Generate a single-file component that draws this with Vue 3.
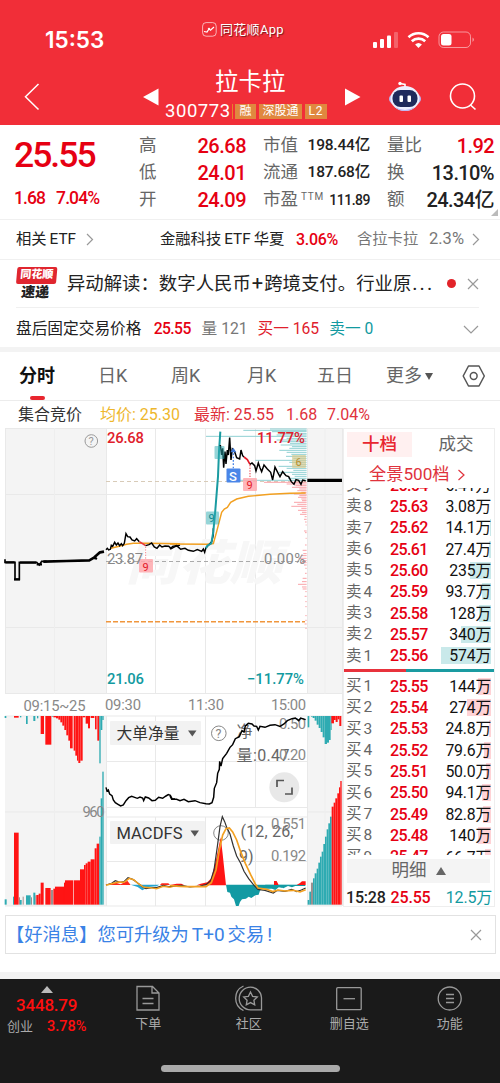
<script setup>
const quotes = [
  { l1: "高", v1: "26.68", l2: "市值", v2: "198.44亿", l3: "量比", v3: "1.92", up: true },
  { l1: "低", v1: "24.01", l2: "流通", v2: "187.68亿", l3: "换", v3: "13.10%" },
  { l1: "开", v1: "24.09", l2: "市盈", sup: "TTM", v2: "111.89", l3: "额", v3: "24.34亿" },
];

const tabs = ["分时", "日K", "周K", "月K", "五日"];

// bar = width of the depth bar behind the volume
const sells = [
  { n: 9, price: "25.64", vol: "6.41万", bar: 0 },
  { n: 8, price: "25.63", vol: "3.08万", bar: 0 },
  { n: 7, price: "25.62", vol: "14.1万", bar: 1 },
  { n: 6, price: "25.61", vol: "27.4万", bar: 2 },
  { n: 5, price: "25.60", vol: "235万", bar: 21 },
  { n: 4, price: "25.59", vol: "93.7万", bar: 9 },
  { n: 3, price: "25.58", vol: "128万", bar: 12 },
  { n: 2, price: "25.57", vol: "340万", bar: 30 },
  { n: 1, price: "25.56", vol: "574万", bar: 50 },
];
const buys = [
  { n: 1, price: "25.55", vol: "144万", bar: 13 },
  { n: 2, price: "25.54", vol: "274万", bar: 24 },
  { n: 3, price: "25.53", vol: "24.8万", bar: 2 },
  { n: 4, price: "25.52", vol: "79.6万", bar: 7 },
  { n: 5, price: "25.51", vol: "50.0万", bar: 5 },
  { n: 6, price: "25.50", vol: "94.1万", bar: 9 },
  { n: 7, price: "25.49", vol: "82.8万", bar: 8 },
  { n: 8, price: "25.48", vol: "140万", bar: 13 },
  { n: 9, price: "25.47", vol: "66.7万", bar: 6 },
];

const R = "#ff1414";
const T = "#2eabb2";
const G = "#9c8f8f";

// [x, width, end y, colour], three units to a pixel
const leftTop = [
  [14, 5, 24, T], [42, 14, 23, R], [60, 4, 22, T], [78, 5, 42, T], [100, 6, 33, T], [111, 4, 25, T],
  [122, 10, 72, R], [136, 18, 104, R], [155, 5, 20, T], [160, 8, 22, R], [168, 7, 25, R], [175, 6, 29, R],
  [181, 6, 37, R], [187, 6, 47, R], [193, 6, 60, R], [199, 6, 76, R], [205, 5, 92, R], [210, 8, 115, R],
  [221, 5, 122, R], [226, 5, 137, R], [231, 4, 152, R], [235, 6, 159, R], [241, 7, 152, R], [248, 8, 22, R],
  [257, 7, 41, R], [264, 6, 55, R], [272, 11, 24, R], [285, 5, 58, R], [292, 6, 92, R], [298, 4, 160, T],
  [302, 5, 60, T], [307, 4, 30, T],
];
const leftBottom = [
  [14, 6, 568, T], [39, 3, 560, T], [42, 14, 368, R], [57, 3, 562, G], [60, 5, 570, T], [68, 3, 560, G],
  [78, 14, 556, T], [93, 3, 562, G], [100, 6, 548, T], [106, 3, 556, G], [109, 7, 555, R], [116, 6, 551, R],
  [122, 9, 518, R], [136, 16, 534, R], [153, 6, 540, G], [160, 5, 536, R], [165, 27, 530, R], [192, 3, 518, R],
  [195, 24, 511, R], [221, 19, 511, R], [240, 12, 478, R], [252, 5, 465, R], [257, 6, 460, R], [263, 9, 455, R],
  [272, 12, 448, R], [284, 6, 415, R], [290, 8, 401, R], [298, 4, 380, T], [302, 5, 265, T], [307, 4, 185, T],
];
const rightTop = [
  [413, 5, 52, T], [423, 5, 20, T], [428, 6, 24, T], [434, 6, 32, T], [440, 6, 44, T], [446, 6, 54, T],
  [452, 6, 66, T], [458, 6, 82, T], [464, 7, 102, T], [471, 6, 98, T], [477, 5, 90, T], [482, 3, 60, T],
  [484, 8, 40, R], [492, 5, 30, R], [497, 6, 36, R], [503, 5, 28, R], [508, 6, 48, R],
];
const rightBottom = [
  [413, 5, 570, T], [418, 5, 545, T], [423, 6, 518, G], [429, 5, 505, T], [434, 6, 490, T], [440, 5, 476, T],
  [445, 5, 458, T], [450, 5, 440, T], [455, 5, 425, T], [460, 5, 402, T], [465, 5, 380, T], [470, 5, 358, T],
  [475, 5, 340, T], [480, 5, 320, T], [485, 6, 290, R], [491, 5, 278, R], [496, 6, 265, R], [502, 5, 250, R],
  [507, 4, 232, R], [511, 4, 213, R],
];

// price distribution at the right edge: [y, length]
const chips = [
  [12, 110], [16, 190], [20, 104], [26, 80], [30, 90], [34, 302], [40, 60], [45, 90], [50, 80], [55, 50],
  [60, 78], [65, 44], [70, 52], [76, 82], [82, 60], [88, 46], [94, 62], [100, 40], [106, 154], [112, 52],
  [118, 34], [124, 84], [130, 60], [136, 40], [142, 84], [148, 44], [154, 36], [160, 56], [166, 230],
];
const chipsDown = [
  [172, 128], [177, 60], [182, 34], [187, 44], [192, 22], [197, 28], [202, 16], [207, 38], [212, 22], [217, 26],
  [222, 16], [227, 14], [232, 38], [238, 28], [244, 46], [250, 16], [256, 26], [262, 14], [268, 20], [275, 6],
  [283, 8], [291, 5], [300, 3], [318, 8], [323, 5], [340, 3], [360, 5], [376, 12], [386, 10], [392, 16],
  [400, 24], [407, 12], [413, 20], [420, 8], [430, 4], [445, 5], [460, 12], [470, 14], [478, 26], [486, 14],
  [492, 12], [500, 4], [514, 6], [530, 4], [545, 4], [572, 4], [586, 4], [597, 6], [610, 4],
];
</script>

<template>
  <div class="app">
    <header class="header">
      <div class="status">
        <span class="clock">15:53</span>
        <span class="source">
          <svg width="15" height="15" viewBox="0 0 15 15" fill="none" stroke="#fff">
            <rect x=".6" y=".6" width="13.6" height="13.6" rx="3.5" stroke-width=".8" opacity=".8" />
            <path d="M2 9.5l3 .5 2-3 1.5 1.2L12 5" stroke-width="1.2" />
            <circle cx="7" cy="6.8" r=".7" fill="#fff" />
          </svg>
          同花顺App
        </span>
        <svg class="signals" width="104" height="18" viewBox="0 0 104 18">
          <g fill="#fff">
            <rect x="1" y="11" width="4" height="6" rx="1" />
            <rect x="8" y="8" width="4" height="9" rx="1" />
            <rect x="15" y="4.500" width="4" height="12.500" rx="1" />
            <rect x="22" y="1" width="4" height="16" rx="1" opacity=".25" />
            <path d="M46.500 17l-3.400-3.500a5 5 0 0 1 6.800 0z" />
          </g>
          <g fill="none" stroke="#fff" stroke-width="2.600">
            <path d="M36.500 6.300a14.500 14.500 0 0 1 20 0" />
            <path d="M39.800 10.300a9.700 9.700 0 0 1 13.400 0" />
          </g>
          <rect x="67" y="1" width="31.500" height="15.500" rx="4.500" fill="none" stroke="#fff" opacity=".5" />
          <rect x="69" y="3" width="10.500" height="11.500" rx="2.500" fill="#fff" />
          <path d="M100.500 6.500q3 2.200 0 4.500z" fill="#fff" opacity=".5" />
        </svg>
      </div>
      <div class="titlebar">
        <svg class="back" width="16" height="28" viewBox="0 0 16 28" fill="none" stroke="#fff" stroke-width="1.500">
          <path d="M14.500 1L1.500 13.800 14.500 26.500" />
        </svg>
        <svg width="16" height="18" viewBox="0 0 16 18"><path d="M0 9L15.500.500v17z" fill="#fff" /></svg>
        <div class="title">
          <h1>拉卡拉</h1>
          <p>
            <span class="code">300773</span><i></i><b class="b1">融</b><b class="b2">深股通</b><b class="b3">L2</b>
          </p>
        </div>
        <svg width="16" height="18" viewBox="0 0 16 18"><path d="M15.500 9L0 .500v17z" fill="#fff" /></svg>
        <svg class="robot" width="34" height="32" viewBox="0 0 34 32">
          <path d="M17 7V3.500l-5-1" stroke="#fff" stroke-width="1.600" fill="none" />
          <circle cx="12" cy="2.500" r="1.700" fill="#fff" />
          <ellipse cx="17" cy="18" rx="16" ry="8" fill="#b9b5f5" />
          <ellipse cx="17" cy="17.500" rx="14.500" ry="12.500" fill="#eef0ff" />
          <path d="M7 26q10 6 20 0-3 4-10 4t-10-4z" fill="#b9b5f5" />
          <rect x="4.500" y="9" width="25" height="17" rx="8" fill="#1f2a5c" />
          <rect x="11.500" y="14.500" width="3.500" height="6.500" rx="1" fill="#fff" />
          <rect x="19.500" y="14.500" width="3.500" height="6.500" rx="1" fill="#fff" />
        </svg>
        <svg width="28" height="28" viewBox="0 0 28 28" fill="none" stroke="#fff" stroke-width="1.600">
          <circle cx="13.500" cy="13" r="12" />
          <path d="M21.500 22l5 4.500" />
        </svg>
      </div>
    </header>

    <section class="quote">
      <div class="last">
        <strong>25.55</strong>
        <p><span>1.68</span><span>7.04%</span></p>
      </div>
      <div class="grid">
        <template v-for="q in quotes" :key="q.l1">
          <label>{{ q.l1 }}</label>
          <span class="v1">{{ q.v1 }}</span>
          <label class="l2">{{ q.l2 }}<sup v-if="q.sup">{{ q.sup }}</sup></label>
          <span class="v2" :class="{ small: q.sup }">{{ q.v2 }}</span>
          <label class="l3">{{ q.l3 }}</label>
          <span class="v3" :class="{ up: q.up }">{{ q.v3 }}</span>
        </template>
      </div>
      <svg class="corner" width="7" height="7"><path d="M7 0v7H0z" fill="#bbb" /></svg>
    </section>

    <section class="etf">
      <span class="e1">相关<em>ETF</em></span>
      <svg width="8" height="13" viewBox="0 0 8 13"><path d="M1 1l5.500 5.500L1 12" fill="none" stroke="#999" stroke-width="1.200" /></svg>
      <span class="e2">金融科技<em>ETF</em>华夏</span>
      <span class="e3">3.06%</span>
      <span class="e4">含拉卡拉</span>
      <span class="e5">2.3%</span>
      <svg width="8" height="13" viewBox="0 0 8 13"><path d="M1 1l5.500 5.500L1 12" fill="none" stroke="#999" stroke-width="1.200" /></svg>
    </section>

    <section class="news">
      <div class="logo">
        <b>同花顺</b>
        <i>速递</i>
      </div>
      <p>异动解读：数字人民币<em>+</em>跨境支付。行业原<em class="dots">...</em></p>
      <span class="dot"></span>
      <svg width="12" height="12" viewBox="0 0 12 12"><path d="M1 1l10 10M11 1L1 11" stroke="#999" stroke-width="1.200" /></svg>
    </section>

    <section class="after">
      <span class="a1">盘后固定交易价格</span>
      <span class="a2">25.55</span>
      <span class="a3">量 121</span>
      <span class="a4">买一 165</span>
      <span class="a5">卖一 0</span>
      <svg width="16" height="9" viewBox="0 0 16 9"><path d="M1 1l7 7 7-7" fill="none" stroke="#999" stroke-width="1.200" /></svg>
    </section>

    <nav class="tabs">
      <span v-for="(t, i) in tabs" :key="t" :class="{ active: i === 0 }">{{ t }}</span>
      <span class="more">更多<svg width="8" height="7"><path d="M0 0h8L4 7z" fill="#555" /></svg></span>
      <svg width="24" height="22" viewBox="0 0 24 22" fill="none" stroke="#555" stroke-width="1.500">
        <path d="M6.500 1h10.500l5.300 10L17 21H6.500L1.200 11z" stroke-linejoin="round" />
        <circle cx="11.700" cy="11" r="3.400" />
      </svg>
    </nav>

    <section class="info">
      <span class="i1">集合竞价</span>
      <span class="i2">均价: 25.30</span>
      <span class="i3">最新: 25.55</span>
      <span class="i4">1.68</span>
      <span class="i5">7.04%</span>
    </section>

    <main class="board">
      <svg class="chart" width="343" height="479" viewBox="0 428 343 479">
        <!-- auction and after-hours areas -->
        <path d="M5 428h101v266H5zM307 428h35v266h-35zM5 716h101v190H5zM307 716h35v190h-35z" fill="#f4f4f4" />
        <g stroke="#e9e9e9" stroke-width="1" fill="none">
          <path d="M5 428.500H342M5 494.500H342M5 627.500H342M5 693.500H342" />
          <path d="M5 716H342M106 761.500H307M106 807.500H307M5 812H106M307 812H342M106 817H307M106 861.500H307M5 906H342" />
          <path d="M5.500 428V694M106.500 428V694M155.500 428V694M205.500 428V694M255.500 428V694M307.500 428V694M342.500 428V906" />
          <path d="M106.500 716V906M155.500 716V807M205.500 716V807M255.500 716V807M155.500 817V906M205.500 817V906M255.500 817V906M307.500 716V906" />
        </g>
        <path d="M54.500 428V694M54.500 716V906M325 428V694M325 716V906" stroke="#eee" />

        <text x="126" y="580" class="mark" textLength="156" lengthAdjust="spacingAndGlyphs">同花顺</text>

        <g fill="none">
          <path d="M106 481.500H307" stroke="#d8cbb8" stroke-dasharray="4 3" />
          <path d="M106 561.500H307" stroke="#aaa" stroke-dasharray="4 3" />
          <path d="M106 621.700H305" stroke="#f0963c" stroke-width="1.500" stroke-dasharray="5 2" />
        </g>

        <g transform="translate(170 425) scale(.3333)" stroke-width="3">
          <path v-for="c in chips" :key="c[0]" :d="`M410 ${c[0]}h${-c[1]}`" stroke="#8fd0d3" />
          <path v-for="c in chipsDown" :key="c[0]" :d="`M410 ${c[0]}h${-c[1]}`" stroke="#f9a3a8" />
        </g>

        <g class="line" transform="translate(0 425) scale(.3333)">
          <polyline class="avg" points="333,370 360,363 380,358 400,355 437,355 540,356" />
          <polyline points="15,403 15,412 45,412 45,463 58,463 58,412 110,412 118,420 125,409 140,409" stroke-width="5" />
          <path d="M42 463h18M16 412h28M60 413h48M110 418h16" stroke-width="7" />
          <polyline points="130,410 200,408 268,406 282,398 288,400 284,396 300,382 312,380" stroke-width="8" stroke-linejoin="round" />
          <polyline points="318,374 322,370 326,375 331,373 334,361 338,364 344,352 349,360 354,354 359,362 364,356 368,362 373,355 378,326 383,335 390,336 396,345 404,348 410,341 418,350" />
          <polyline points="418,350 437,362" stroke="#e8323c" stroke-width="5" />
          <polyline points="437,362 447,359 455,354 463,366 471,370 479,360 486,366 495,363 506,364 514,371 525,365 540,360" />
          <path d="M437 365v40" stroke="#f58a90" stroke-width="3" stroke-dasharray="4 4" />
        </g>
        <g class="line" transform="translate(170 425) scale(.3333)">
          <polyline class="avg" points="0,357 110,358 130,356 140,320 155,262 163,252 172,247 182,232 200,222 235,214 300,208 360,205 407,204" />
          <polyline points="0,373 8,364 20,362 32,373 45,370 55,376 70,379 82,374 95,379 100,372 104,382 108,368 118,358 125,350 130,330 130,310" />
          <polyline points="108,370 112,362 124,355 130,320 136,255 144,155 147,80 151,20" stroke="#1a9ba1" stroke-width="6" />
          <polyline points="151,60 155,90 158,70 161,128 165,80 168,117 172,75 175,90 179,38 183,105 187,72 194,80 200,98 209,102 213,75 218,92 222,96" />
          <polyline points="222,96 232,104 240,118" stroke="#e31b29" stroke-width="5" />
          <polyline points="240,118 246,114 254,122 258,138 265,114 270,128 275,140 282,120 292,132 302,142 308,165 315,126 323,142 330,155 338,140 348,152 356,155 364,170 372,178 378,164 386,166 393,178 398,165 407,167" />
          <path d="M412 166H516" stroke-width="10" />
          <path d="M190 85v45" stroke="#4a86e8" stroke-width="4" stroke-dasharray="5 5" />
          <path d="M190 68l9 14h-18z" fill="#3f78d8" stroke="none" />
          <path d="M240 120v40" stroke="#e8323c" stroke-width="3" stroke-dasharray="4 4" />
        </g>

        <rect x="139" y="559" width="14" height="13.500" rx="1" fill="#ffa9ae" opacity=".85" />
        <text x="142.500" y="570.500" class="tag" fill="#e31b29">9</text>
        <rect x="243" y="478" width="14" height="13" rx="1" fill="#ffa9ae" opacity=".85" />
        <text x="246.500" y="489" class="tag" fill="#e31b29">9</text>
        <rect x="226.500" y="468.500" width="14" height="14" rx="1" fill="#4a86e8" />
        <text x="229" y="480.500" class="tag s" fill="#fff">S</text>
        <rect x="206" y="511.500" width="13" height="13" rx="1" fill="#2eabb2" opacity=".5" />
        <text x="208.500" y="522" class="tag" fill="#128a90">9</text>
        <rect x="214.500" y="446" width="10" height="13" rx="1" fill="#2eabb2" opacity=".5" />
        <rect x="292" y="455" width="14" height="13" rx="1" fill="#d9c98a" opacity=".65" />
        <text x="295.500" y="466" class="tag" fill="#b98f2e">6</text>

        <circle cx="91.300" cy="441" r="6.300" fill="none" stroke="#999" />
        <text x="88.500" y="445.200" font-size="11" fill="#999">?</text>

        <g class="num">
          <text x="107" y="443" textLength="37" fill="#e0202c">26.68</text>
          <text x="257" y="443" textLength="48" fill="#e0202c">11.77%</text>
          <text x="107" y="684" textLength="37" fill="#129aa0">21.06</text>
          <text x="247" y="684" textLength="57" fill="#129aa0">−11.77%</text>
        </g>
        <g class="num gray">
          <text x="107" y="564" textLength="36">23.87</text>
          <text x="264" y="564" textLength="41">0.00%</text>
          <text x="23.500" y="711" textLength="62">09:15~25</text>
          <text x="105" y="710" textLength="36">09:30</text>
          <text x="188" y="710" textLength="36">11:30</text>
          <text x="271" y="710" textLength="35">15:00</text>
        </g>

        <g transform="translate(0 710) scale(.3333)">
          <rect v-for="b in leftTop" :key="b[0]" :x="b[0]" y="18" :width="b[1]" :height="b[2] - 18" :fill="b[3]" />
          <rect v-for="b in leftBottom" :key="b[0]" :x="b[0]" :y="b[2]" :width="b[1]" :height="584 - b[2]" :fill="b[3]" />
        </g>
        <g transform="translate(170 710) scale(.3333)">
          <rect v-for="b in rightTop" :key="b[0]" :x="b[0]" y="18" :width="b[1]" :height="b[2] - 18" :fill="b[3]" />
          <rect v-for="b in rightBottom" :key="b[0]" :x="b[0]" :y="b[2]" :width="b[1]" :height="584 - b[2]" :fill="b[3]" />
        </g>
        <text x="82.500" y="817" class="num gray" textLength="22">960</text>

        <!-- indicator selectors -->
        <rect x="110" y="721" width="91" height="24" rx="1" fill="#f2f2f2" />
        <text x="116.500" y="739" class="sel" textLength="63">大单净量</text>
        <path d="M188 730.500h8.500l-4.200 6z" fill="#555" />
        <rect x="110" y="821" width="95" height="23" rx="1" fill="#f2f2f2" />
        <text x="116.500" y="838.500" class="sel latin" textLength="66">MACDFS</text>
        <path d="M190.500 830.500h8.500l-4.200 6z" fill="#555" />
        <circle cx="218.800" cy="733.300" r="7.300" fill="none" stroke="#888" />
        <text x="215.500" y="738" font-size="12.500" fill="#888">?</text>
        <circle cx="221" cy="833" r="7.300" fill="none" stroke="#888" />
        <text x="236.500" y="737" class="val">净</text>
        <text x="236.500" y="761" class="val" textLength="53">量:0.47</text>
        <text x="240.500" y="836.500" class="val" textLength="53">(12, 26,</text>
        <text x="239" y="861.500" class="val">9)</text>
        <g class="num gray axis">
          <text x="279" y="729" textLength="27">0.50</text>
          <text x="279" y="760" textLength="27">0.20</text>
          <text x="271" y="829" textLength="35">0.551</text>
          <text x="271" y="860.500" textLength="35">0.192</text>
        </g>

        <g class="line" transform="translate(0 710) scale(.3333)">
          <polyline points="318,232 321,243 325,240 329,252 336,257 340,270 346,278 354,283 362,288 370,285 378,272 386,263 395,259 404,262 412,265 420,261 428,264 431,272 436,261 446,264 456,272 466,271 476,262 488,265 498,258 505,254 511,256 516,266 525,267" />
          <path d="M320 525q15-8 30-6l12 4 20-11 10 13zM480 525l5-5h20l5 5z" fill="#ff2a1c" stroke="none" />
          <path d="M392 524h86l-8 5-25 2-18 10-14-10z" fill="#25a4d0" stroke="none" />
          <polyline class="thin" points="318,525 335,520 346,512 360,517 372,515 384,503 400,509 412,518 428,530 438,536 456,533 470,533 490,526 505,530 527,528" />
          <polyline class="avg" points="318,526 340,520 355,516 372,517 388,505 402,510 416,522 432,532 450,533 470,536 490,529 510,532 527,527" />
        </g>
        <g class="line" transform="translate(170 710) scale(.3333)">
          <polyline points="0,258 5,268 20,268 30,272 42,268 55,275 75,272 90,278 108,281 118,282 126,278 131,262 133,235 140,218 143,190 148,178 149,154 153,168 158,146 170,130 180,112 188,104 196,86 208,80 216,62 222,66 226,48 235,40 246,42 252,48 260,49 265,60 270,49 285,52 300,46 315,44 330,49 342,42 352,32 366,26 376,24 386,32 392,24 407,29" />
          <path d="M80 526l12-5 20-4 12-12 14-55 14-68 6 50 10 94z" fill="#ff1414" stroke="none" />
          <path d="M168 524l4 22 8 2 4 12 8 8 6 20h8l4-12 6-8 12-2 8-6 8 4 12-8 10-2 4-12 6-6h30l10 4 10-8 12 2v-6h68v-3z" fill="#129aa3" stroke="none" />
          <path d="M285 524h40v8l-18 2zM326 524h60l-20 8-12-4-14 7z" fill="#129aa3" stroke="none" />
          <path d="M312 525v-12h8l6 12zM380 525l10-6 6-5h11v11zM0 525l20-4h14l8 4z" fill="#ff1414" stroke="none" />
          <polyline class="thin" points="0,529 35,526 60,531 90,528 108,524 122,512 132,480 142,410 150,350 157,320 164,335 170,352 180,372 190,408 200,438 212,460 222,484 236,506 252,526 264,538 285,541 310,549 322,541 345,544 365,538 380,545 394,540 407,534" />
          <polyline class="avg" points="0,527 30,529 50,530 80,530 108,530 124,518 138,480 148,420 158,375 168,356 178,354 188,366 200,390 212,425 226,460 242,494 256,522 264,534 290,538 308,545 325,540 345,543 370,541 390,546 407,539" stroke-width="5" />
        </g>
        <circle cx="284.300" cy="787.300" r="15" fill="#e6e6e6" opacity=".9" />
        <path d="M277 787v-6.500h7M292 787.500v6.500h-7" fill="none" stroke="#555" stroke-width="1.700" />
      </svg>

      <aside class="depth">
        <div class="switch"><span class="on">十档</span><span>成交</span></div>
        <div class="full">全景500档<svg width="7" height="12" viewBox="0 0 7 12"><path d="M.500 1L6 6 .500 11" fill="none" stroke="#e0323c" stroke-width="1.200" /></svg></div>
        <ul class="sell">
          <li v-for="s in sells" :key="s.n">
            <span class="lv">卖<em>{{ s.n }}</em></span><span class="pr">{{ s.price }}</span>
            <span class="vo"><i :style="{ width: s.bar + 'px' }"></i>{{ s.vol }}</span>
          </li>
        </ul>
        <div class="ratio"><i></i></div>
        <ul class="buy">
          <li v-for="b in buys" :key="b.n">
            <span class="lv">买<em>{{ b.n }}</em></span><span class="pr">{{ b.price }}</span>
            <span class="vo"><i :style="{ width: b.bar + 'px' }"></i>{{ b.vol }}</span>
          </li>
        </ul>
        <div class="detail">明细<svg width="10" height="8"><path d="M5 0l5 8H0z" fill="#666" /></svg></div>
        <div class="tick"><span>15:28</span><span class="p">25.55</span><span class="t">12.5万</span></div>
      </aside>
    </main>

    <section class="banner">
      <p>【好消息】您可升级为<em>T+0</em>交易<em>!</em></p>
      <svg width="12" height="12" viewBox="0 0 12 12"><path d="M1 1l10 10M11 1L1 11" stroke="#999" stroke-width="1.200" /></svg>
    </section>

    <footer class="footer">
      <div class="bar">
        <div class="index">
          <svg width="12" height="7"><path d="M6 0l6 7H0z" fill="#bbb" /></svg>
          <strong>3448.79</strong>
          <p><span>创业</span><b>3.78%</b></p>
        </div>
        <div class="item">
          <svg width="26" height="26" viewBox="0 0 26 26">
            <path d="M2 1.500h15.500l6.500 6.500v17H2zM17 1.500V8h7M7.500 13.500h11M7.500 18.500h11" />
          </svg>
          下单
        </div>
        <div class="item">
          <svg width="28" height="26" viewBox="0 0 28 26">
            <path d="M15.500 2.200a11.300 11.300 0 1 0 0 22.600h11v-12a11 11 0 0 0-11-10.600zM8.500 1a13.500 13.500 0 0 0 0 24.500" />
            <path d="M15.500 7l2.100 4.300 4.700.600-3.400 3.300.800 4.700-4.200-2.300-4.200 2.300.800-4.700-3.400-3.300 4.700-.600z" />
          </svg>
          社区
        </div>
        <div class="item">
          <svg width="26" height="26" viewBox="0 0 26 26"><rect x=".700" y="2.700" width="24.500" height="22" rx="1" /><path d="M7.500 13.700h11.500" /></svg>
          删自选
        </div>
        <div class="item">
          <svg width="26" height="26" viewBox="0 0 26 26"><circle cx="12.700" cy="13.500" r="11.500" /><path d="M9 9.500h8M9 13.500h8M9 17.500h8" /></svg>
          功能
        </div>
      </div>
      <div class="home"></div>
    </footer>
  </div>
</template>

<style>
body {
  background: #fff;
}
</style>

<style scoped>
* {
  box-sizing: border-box;
}

.app {
  width: 500px;
  height: 1083px;
  overflow: hidden;
  display: flex;
  flex-direction: column;
  font-family: Roboto, "Noto Sans CJK SC", sans-serif;
  color: #222;
  line-height: 1;
  white-space: nowrap;
}

p, h1, ul {
  margin: 0;
  padding: 0;
}

em, i, sup {
  font-style: normal;
}

svg {
  flex: none;
  display: block;
}

.header {
  height: 125px;
  background: #f12e38;
  color: #fff;
}

.status {
  display: flex;
  height: 68px;
}

.clock {
  width: 157px;
  padding: 29px 0 0 45px;
  font: 600 22.5px/1 Inter, sans-serif;
  letter-spacing: 0;
}

.source {
  display: flex;
  gap: 3px;
  width: 170px;
  padding: 22px 0 0 45px;
  font-size: 13px;
  line-height: 15px;
  letter-spacing: 0.3px;
  text-shadow: 1px 1px 1px rgba(0, 0, 0, 0.5);
}

.signals {
  margin: 31px 0 0 45px;
}

.titlebar {
  display: flex;
  align-items: center;
  height: 57px;
  padding-left: 24px;
}

.titlebar .back {
  margin-right: 103px;
}

.title {
  width: 165px;
  margin: 0 15px 0 6px;
  height: 57px;
}

.title h1 {
  margin: 1px 0 0 50px;
  font-size: 23.5px;
  line-height: 26px;
  font-weight: 400;
}

.title p {
  display: flex;
  align-items: center;
  height: 17px;
  margin: 8px 0 0;
}

.title p .code {
  font-size: 18.5px;
  letter-spacing: 0.55px;
}

.title p i {
  width: 2px;
  height: 15px;
  margin: 0 2.500px 0 1px;
  background: #e8802c;
}

.title p b {
  height: 15px;
  margin-right: 3px;
  background: #e0883f;
  font-size: 12px;
  line-height: 14px;
  font-weight: 400;
  text-align: center;
  flex: none;
}

.b1 {
  width: 21px;
}

.b2 {
  width: 43px;
}

.title p .b3 {
  width: 22px;
  letter-spacing: 1px;
}

.robot {
  margin: 0 27px 0 27px;
}

.quote {
  position: relative;
  display: flex;
  height: 95px;
  padding: 7px 6px 0 14px;
  border-bottom: 1px solid #f0f0f0;
}

.last {
  width: 125px;
  color: #e60012;
}

.last strong {
  display: block;
  margin-top: 6px;
  font-size: 35.5px;
  line-height: 35px;
  font-weight: 500;
  letter-spacing: -2px;
}

.last p {
  display: flex;
  gap: 11px;
  margin-top: 17px;
  font-size: 17.5px;
  font-weight: 500;
  letter-spacing: -0.9px;
}

.grid {
  display: grid;
  grid-template-columns: 47px 60px 47px 77px 42px 82px;
  grid-auto-rows: 27px;
  align-items: center;
  font-size: 17.5px;
}

.grid label {
  color: #666;
}

.grid .l2,
.grid .l3 {
  padding-left: 17px;
}

.grid span {
  justify-self: end;
  font-weight: 500;
}

.grid .v1 {
  color: #e60012;
  font-size: 20px;
  letter-spacing: -0.5px;
}

.grid .v2 {
  font-size: 15.5px;
  letter-spacing: -0.2px;
}

.grid .v2.small {
  font-size: 14px;
  letter-spacing: -0.5px;
}

.grid .v3 {
  font-size: 20px;
  letter-spacing: -0.6px;
}

.grid .up {
  color: #e60012;
}

.grid sup {
  margin-left: 3px;
  font-size: 10px;
  letter-spacing: 0.8px;
  vertical-align: 5px;
  line-height: 0;
}

.corner {
  position: absolute;
  right: 2px;
  bottom: 3px;
}

.etf {
  display: flex;
  align-items: center;
  height: 40px;
  padding-left: 16px;
  border-bottom: 1px solid #f0f0f0;
  font-size: 15.300px;
}

.etf em {
  margin: 0 3px;
}

.etf .e1 {
  width: 70px;
}

.etf .e2 {
  width: 136px;
  margin-left: 66px;
}

.etf .e3 {
  width: 61px;
  color: #e60012;
  font-weight: 500;
  font-size: 16px;
  letter-spacing: -0.3px;
}

.etf .e4 {
  width: 72px;
  color: #777;
}

.etf .e5 {
  width: 43px;
  color: #777;
  font-size: 16.500px;
}

.news {
  display: flex;
  align-items: center;
  height: 48px;
  margin: 0 21px 0 16px;
  border-bottom: 1px solid #f0f0f0;
}

.logo {
  width: 40px;
  margin-right: 11px;
  transform: skewX(-5deg);
  text-align: center;
  font-weight: 900;
}

.logo b {
  display: block;
  height: 17px;
  border-radius: 2px;
  background: #e0262f;
  color: #fff;
  font-size: 11px;
  line-height: 16px;
  font-weight: 900;
}

.logo i {
  display: block;
  margin-top: 1px;
  font-size: 14px;
  line-height: 15px;
}

.news p {
  width: 381px;
  font-size: 18.400px;
}

.news p em {
  margin: 0 1px;
  font-size: 20px;
}

.news p .dots {
  letter-spacing: 2px;
}

.news .dot {
  width: 9px;
  height: 9px;
  margin-right: 11px;
  border-radius: 50%;
  background: #e22329;
  flex: none;
}

.after {
  display: flex;
  align-items: center;
  height: 44px;
  padding: 3px 21px 0 16px;
  border-bottom: 5px solid #f3f3f3;
  font-size: 15.700px;
}

.after .a1 {
  width: 138px;
}

.after .a2 {
  width: 48px;
  color: #e60012;
  font-weight: 500;
  letter-spacing: -0.6px;
}

.after .a3 {
  width: 56px;
  color: #777;
}

.after .a4 {
  width: 72px;
  color: #e0202c;
}

.after .a5 {
  width: 134px;
  color: #129aa0;
}

.tabs {
  display: grid;
  grid-template-columns: 79px 73px 76px 70px 69px 76px 24px;
  align-items: center;
  height: 49px;
  padding-left: 19px;
  border-bottom: 1px solid #ececec;
  font-size: 18px;
  color: #666;
}

.tabs span {
  display: flex;
  align-items: center;
}

.tabs .active {
  position: relative;
  color: #111;
  font-weight: 700;
}

.tabs .active::after {
  content: "";
  position: absolute;
  left: 11px;
  top: 29px;
  width: 15px;
  height: 4px;
  border-radius: 2px;
  background: #e8262f;
}

.tabs .more svg {
  margin-left: 3px;
}

.info {
  display: flex;
  align-items: center;
  height: 27px;
  padding-left: 18px;
  font-size: 16px;
  color: #e0323c;
  flex: none;
}

.info .i1 {
  width: 82px;
  color: #333;
}

.info .i2 {
  width: 94px;
  color: #eeb72c;
}

.info .i3 {
  width: 92px;
}

.info .i4 {
  width: 41px;
}

.board {
  display: flex;
  height: 479px;
  flex: none;
}

.chart text {
  font-family: Roboto, "Noto Sans CJK SC", sans-serif;
}

.chart .num text,
.chart text.num {
  font-size: 14.800px;
}

.chart .gray text,
.chart text.gray {
  fill: #888;
}

.chart .num:not(.gray) text {
  font-weight: 500;
}

.chart .mark {
  font-size: 48px;
  font-weight: 900;
  font-style: italic;
  fill: #f7f7f7;
}

.chart .tag {
  font-size: 11px;
}

.chart .tag.s {
  font-size: 13px;
  font-weight: 500;
}

.chart .sel {
  font-size: 15.700px;
  fill: #333;
}

.chart .sel.latin {
  font-size: 16.500px;
}

.chart .val {
  font-size: 16px;
  fill: #666;
}

.line {
  fill: none;
  stroke: #000;
  stroke-width: 4.4px;
}

.line .thin {
  stroke: #333;
  stroke-width: 3.6px;
}

.line .avg {
  stroke: #f2a021;
}

.depth {
  width: 152px;
  border: 1px solid #eee;
  font-size: 15.500px;
}

.switch {
  display: flex;
  height: 28px;
  padding: 3px 2px 0 3px;
  color: #666;
  font-size: 17.500px;
}

.switch span {
  width: 75px;
  height: 25px;
  line-height: 24px;
  text-align: center;
}

.switch .on {
  width: 68px;
  margin-right: 8px;
  background: #fff0f0;
  color: #e8262f;
  font-weight: 500;
}

.full {
  display: flex;
  align-items: center;
  gap: 8px;
  height: 31px;
  padding: 4px 0 0 25px;
  color: #e0323c;
  font-size: 17.200px;
}

ul {
  display: flex;
  flex-direction: column;
  overflow: hidden;
  list-style: none;
}

.sell {
  height: 179px;
  justify-content: flex-end;
}

.buy {
  height: 179px;
}

li {
  display: flex;
  align-items: center;
  height: 21.350px;
  padding: 0 3px 0 2px;
  flex: none;
}

.lv {
  width: 44px;
  color: #666;
}

.lv em {
  margin-left: 2px;
  font-size: 15.500px;
}

.pr {
  color: #e60012;
  font-weight: 500;
  font-size: 16px;
  letter-spacing: -0.6px;
}

.vo {
  position: relative;
  margin-left: auto;
  font-size: 15.800px;
  letter-spacing: -0.2px;
  color: #111;
}

.vo i {
  position: absolute;
  right: 0;
  top: -1px;
  height: 17px;
  z-index: -1;
  background: #c9e9ea;
}

.buy .vo i {
  background: #ffd3d6;
}

.ratio {
  height: 3px;
  margin: 2px 0 4px;
  background: #1a9ba1;
}

.ratio i {
  display: block;
  width: 62px;
  height: 3px;
  background: #e8323c;
}

.detail {
  display: flex;
  align-items: center;
  justify-content: center;
  gap: 9px;
  height: 24px;
  margin: 4px 4px 0 3px;
  background: #f4f4f4;
  color: #666;
  font-size: 17.500px;
}

.tick {
  display: flex;
  align-items: center;
  height: 26px;
  padding: 3px 2px 0 2px;
  font-size: 16px;
  font-weight: 500;
  letter-spacing: -0.2px;
}

.tick .p {
  margin-left: 5px;
  color: #e60012;
}

.tick .t {
  margin-left: auto;
  color: #129aa0;
  font-weight: 400;
}

.banner {
  display: flex;
  align-items: center;
  justify-content: space-between;
  height: 39px;
  margin: 8px 4px 18px 5px;
  padding: 0 13px 0 0;
  border: 1px solid #e2e2e2;
  flex: none;
  color: #3a82e6;
  font-size: 18.300px;
}

.banner em {
  margin: 0 3px;
  font-size: 19px;
}

.footer {
  height: 111px;
  border-top: 7px solid #f3f3f3;
  background: #1a1a1a;
  color: #aaa;
  flex: none;
}

.bar {
  display: grid;
  grid-template-columns: 98px repeat(4, 1fr);
  height: 86px;
}

.index {
  padding-left: 7px;
}

.index svg {
  margin: 7px 0 0 34px;
}

.index strong {
  display: block;
  margin: 4px 0 0 9px;
  font-size: 17px;
  font-weight: 500;
  letter-spacing: -0.2px;
  color: #ff0f0f;
}

.index p {
  display: flex;
  gap: 14px;
  margin-top: 6px;
  font-size: 13px;
}

.index b {
  font-size: 14.500px;
  font-weight: 500;
  color: #ff0f0f;
}

.item {
  display: flex;
  flex-direction: column;
  align-items: center;
  gap: 6px;
  padding-top: 6px;
  font-size: 13px;
}

.item svg {
  fill: none;
  stroke: #999;
  stroke-width: 1.300px;
}

.home {
  width: 179px;
  height: 7px;
  margin-left: 161px;
  border-radius: 4px;
  background: #aaa;
}
</style>
